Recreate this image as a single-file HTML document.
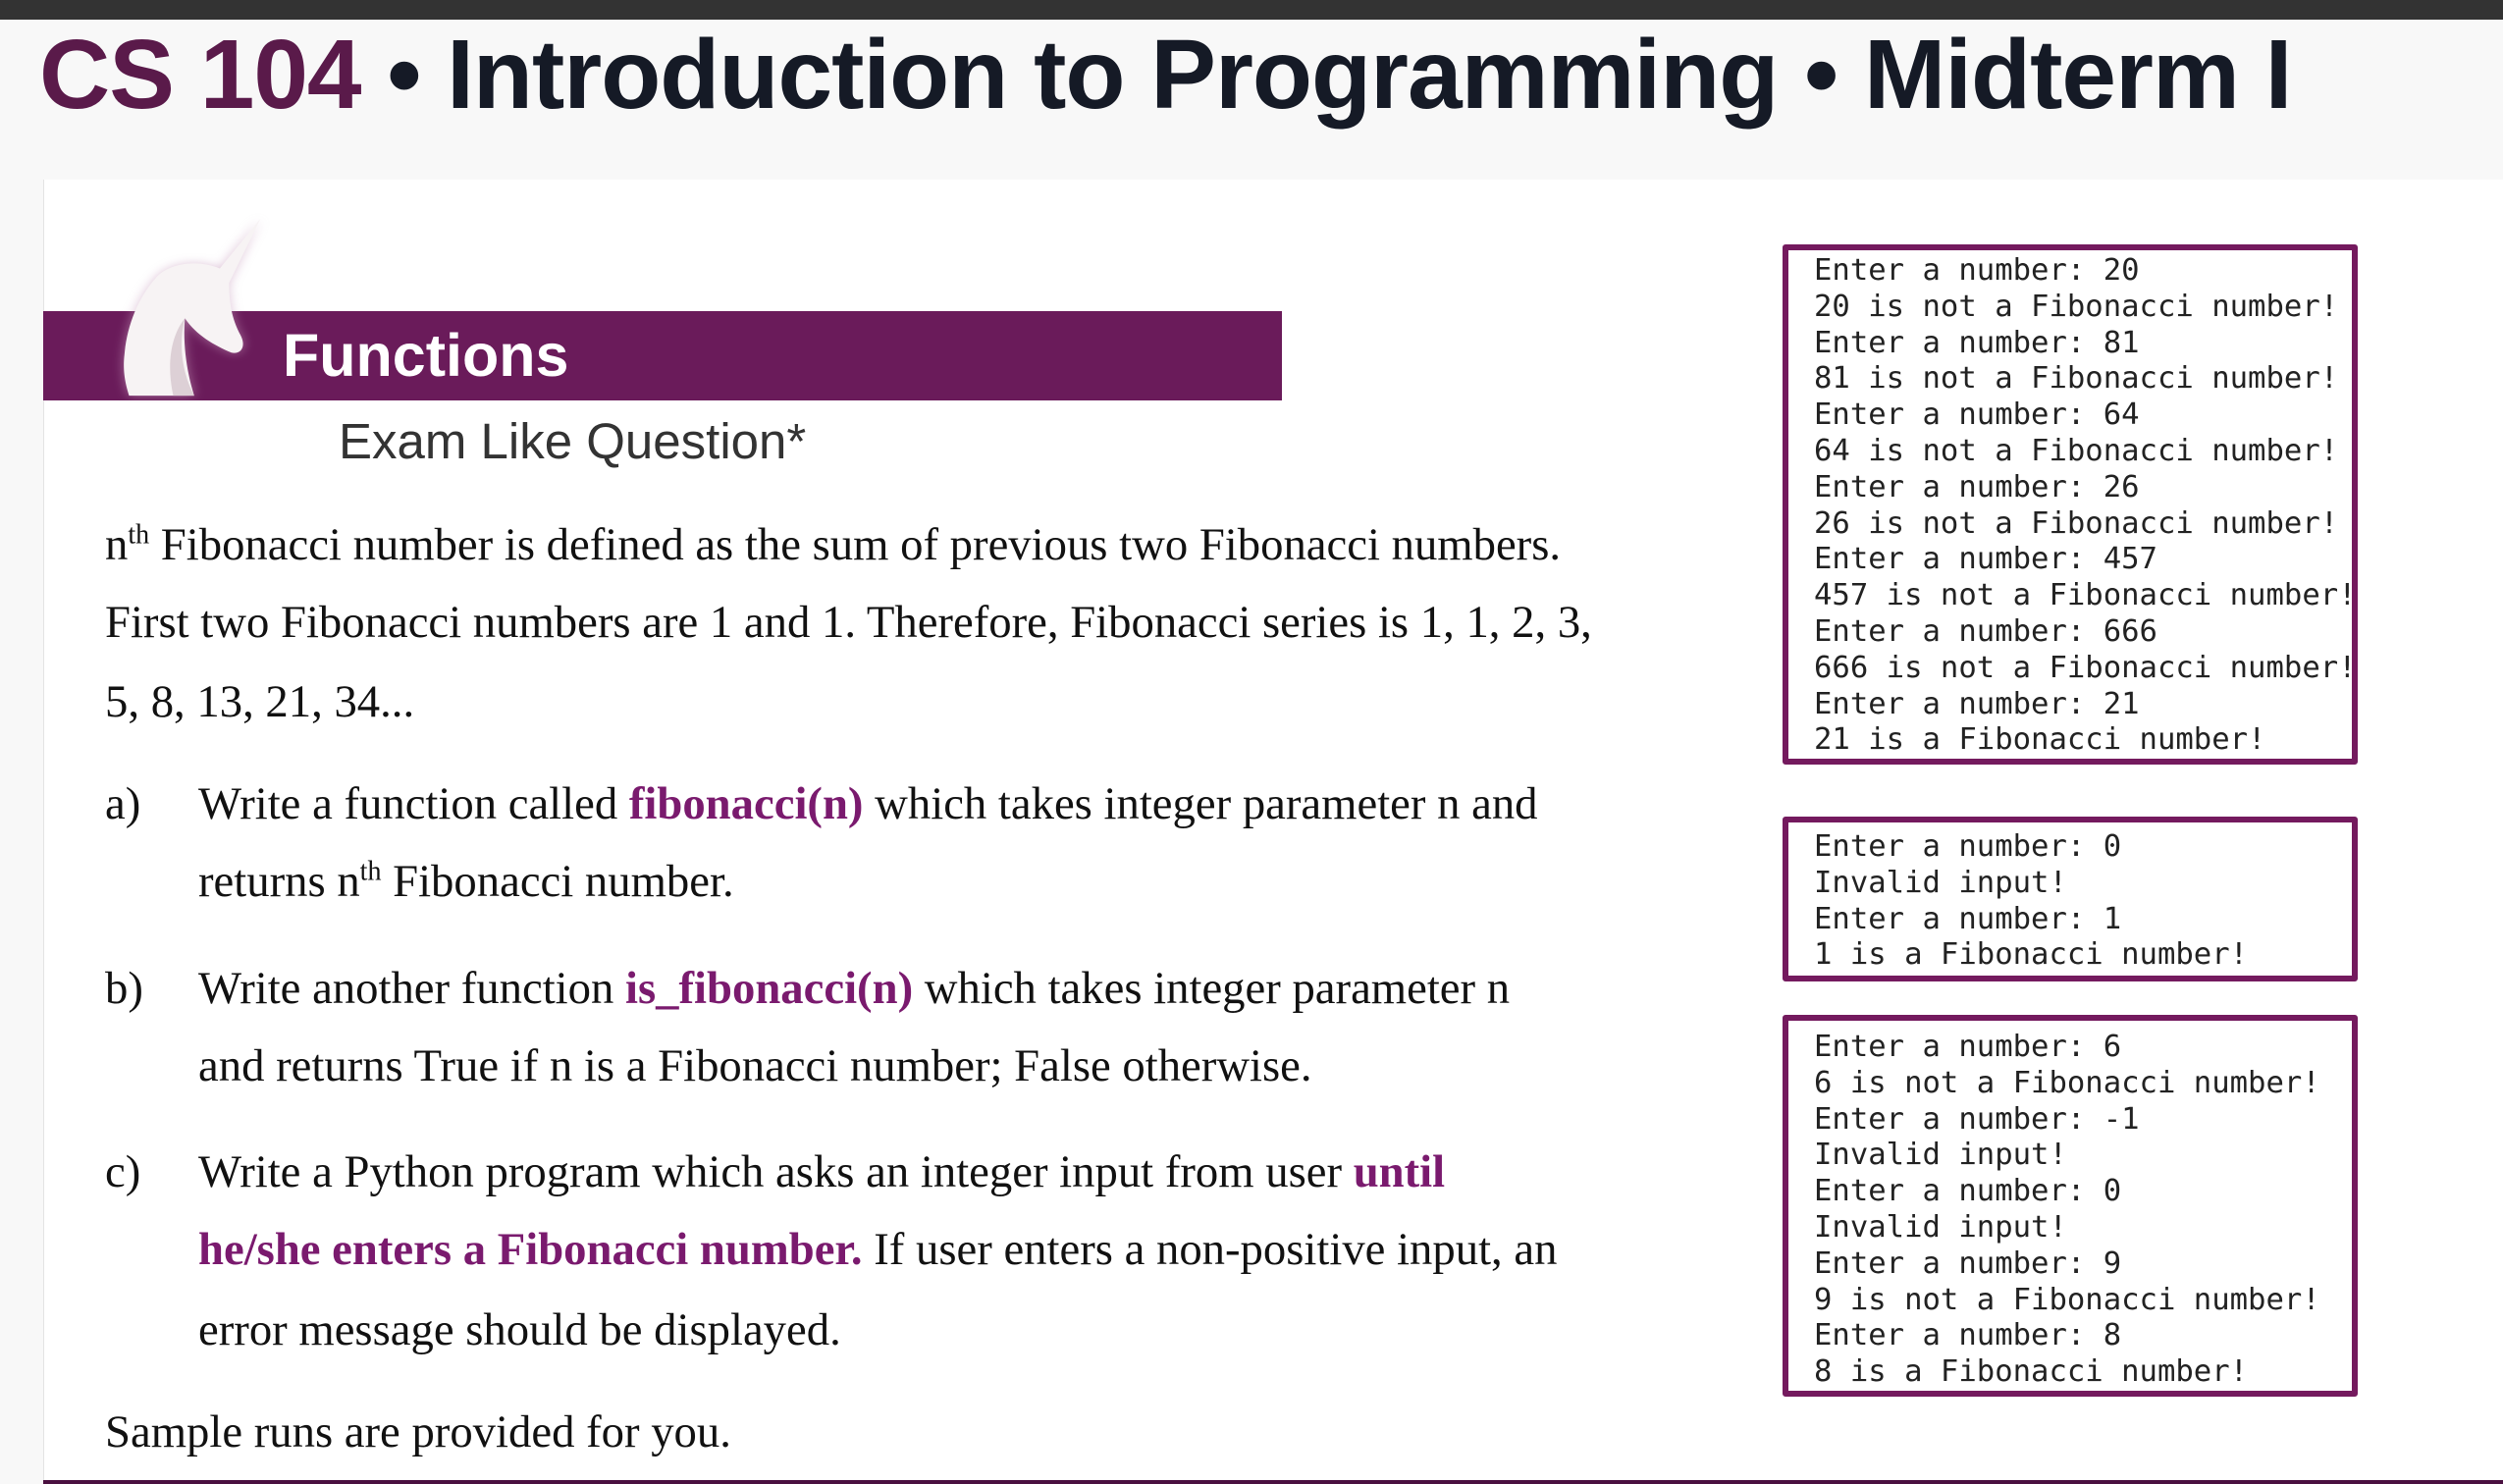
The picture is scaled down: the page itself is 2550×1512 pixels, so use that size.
<!DOCTYPE html>
<html><head><meta charset="utf-8">
<style>
html,body{margin:0;padding:0}
body{width:2550px;height:1512px;background:#f8f8f8;position:relative;overflow:hidden;font-family:"Liberation Serif",serif}
.tabs{position:absolute;left:0;top:0;width:2550px;height:20px;background:#333}
.title{position:absolute;left:40px;top:20px;font:bold 100px/112px "Liberation Sans",sans-serif;color:#151a26;white-space:nowrap;letter-spacing:-1px}
.title .cs{color:#5a1a4a}
.page{position:absolute;left:44px;top:183px;width:2506px;height:1327px;background:#fff;border-left:1px solid #e4e4e4}
.bottomline{position:absolute;left:44px;top:1508px;width:2506px;height:4px;background:#4a1040}
.banner{position:absolute;left:44px;top:317px;width:1262px;height:91px;background:#6a1b5a}
.banner span{position:absolute;left:244px;top:14px;font:bold 61px/62px "Liberation Sans",sans-serif;color:#fff}
.sub{position:absolute;left:345px;top:420px;font:51px/60px "Liberation Sans",sans-serif;color:#333}
.t{position:absolute;font-size:46.7px;line-height:50px;color:#111;white-space:nowrap}
.t sup{font-size:28px;line-height:0}
.p{color:#7a1a6e;font-weight:bold}
.box{position:absolute;left:1816px;width:574px;border:6px solid #741a5e;background:#fff;border-radius:3px;overflow:hidden}
.box pre{margin:0;padding:0 0 0 26px;font:30.6px/36.8px "DejaVu Sans Mono",monospace;color:#222}
</style></head><body>
<div class="tabs"></div>
<div class="title"><span class="cs">CS 104</span> • Introduction to Programming • Midterm I</div>
<div class="page"></div>
<div class="bottomline"></div>
<div class="banner"><span>Functions</span></div>
<svg style="position:absolute;left:96px;top:215px" width="180" height="195" viewBox="0 0 190 200" preserveAspectRatio="none">
<defs><filter id="g" x="-30%" y="-30%" width="160%" height="160%"><feGaussianBlur stdDeviation="5"/></filter></defs>
<g transform="translate(-40,0) scale(1.25,1)">
<path d="M175 8 L140 60 C120 50 95 55 85 70 C70 90 60 120 58 150 C56 170 60 185 62 193 L118 193 C112 170 108 140 110 112 C120 130 135 140 150 148 C158 150 163 142 158 130 C150 112 148 95 148 75 Z" fill="#c9a0c0" filter="url(#g)" opacity="0.6"/>
<path d="M175 8 L140 60 C120 50 95 55 85 70 C70 90 60 120 58 150 C56 170 60 185 62 193 L118 193 C112 170 108 140 110 112 C120 130 135 140 150 148 C158 150 163 142 158 130 C150 112 148 95 148 75 Z" fill="#f7f3f4"/>
<path d="M110 112 C104 140 108 170 118 193 L100 193 C94 160 98 130 110 112 Z" fill="#ddd0d6"/>
</g>
</svg>
<div class="sub">Exam Like Question*</div>
<div class="t" style="left:107px;top:530px">n<sup>th</sup> Fibonacci number is defined as the sum of previous two Fibonacci numbers.</div>
<div class="t" style="left:107px;top:609px">First two Fibonacci numbers are 1 and 1. Therefore, Fibonacci series is 1, 1, 2, 3,</div>
<div class="t" style="left:107px;top:690px">5, 8, 13, 21, 34...</div>
<div class="t" style="left:107px;top:794px">a)</div>
<div class="t" style="left:202px;top:794px">Write a function called <span class="p">fibonacci(n)</span> which takes integer parameter n and</div>
<div class="t" style="left:202px;top:873px">returns n<sup>th</sup> Fibonacci number.</div>
<div class="t" style="left:107px;top:982px">b)</div>
<div class="t" style="left:202px;top:982px">Write another function <span class="p">is_fibonacci(n)</span> which takes integer parameter n</div>
<div class="t" style="left:202px;top:1061px">and returns True if n is a Fibonacci number; False otherwise.</div>
<div class="t" style="left:107px;top:1169px">c)</div>
<div class="t" style="left:202px;top:1169px">Write a Python program which asks an integer input from user <span class="p">until</span></div>
<div class="t" style="left:202px;top:1248px"><span class="p">he/she enters a Fibonacci number.</span> If user enters a non-positive input, an</div>
<div class="t" style="left:202px;top:1330px">error message should be displayed.</div>
<div class="t" style="left:107px;top:1434px">Sample runs are provided for you.</div>

<div class="box" style="top:249px;height:518px"><pre style="padding-top:3px">Enter a number: 20
20 is not a Fibonacci number!
Enter a number: 81
81 is not a Fibonacci number!
Enter a number: 64
64 is not a Fibonacci number!
Enter a number: 26
26 is not a Fibonacci number!
Enter a number: 457
457 is not a Fibonacci number!
Enter a number: 666
666 is not a Fibonacci number!
Enter a number: 21
21 is a Fibonacci number!</pre></div>
<div class="box" style="top:832px;height:156px"><pre style="padding-top:7px">Enter a number: 0
Invalid input!
Enter a number: 1
1 is a Fibonacci number!</pre></div>
<div class="box" style="top:1034px;height:377px"><pre style="padding-top:9px">Enter a number: 6
6 is not a Fibonacci number!
Enter a number: -1
Invalid input!
Enter a number: 0
Invalid input!
Enter a number: 9
9 is not a Fibonacci number!
Enter a number: 8
8 is a Fibonacci number!</pre></div>
</body></html>
